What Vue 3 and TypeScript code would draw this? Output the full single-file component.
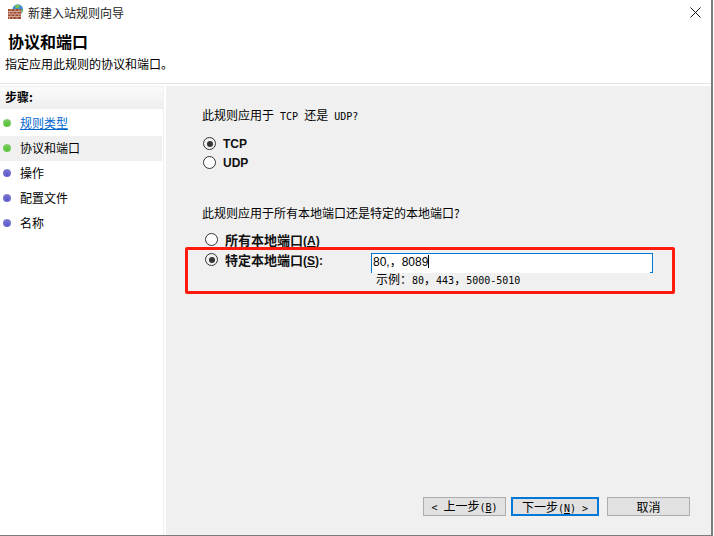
<script setup lang="ts">
interface Step { label: string; color: 'green' | 'blue'; link?: boolean; active?: boolean }
const steps: Step[] = [
  { label: '规则类型', color: 'green', link: true },
  { label: '协议和端口', color: 'green', active: true },
  { label: '操作', color: 'blue' },
  { label: '配置文件', color: 'blue' },
  { label: '名称', color: 'blue' },
]
</script>

<template>
  <div class="win">
    <header class="head">
      <div class="titlebar">
        <svg class="appicon" width="16" height="16" viewBox="0 0 16 16">
          <circle cx="9.800" cy="5.500" r="5.300" fill="#3d8fd0" />
          <path d="M7 1.500c2-1.300 4-1 5 .2-.5 1.800-2.500 3-4.500 2.300zM12 6c1.200-.5 2.500-.5 3 0-.4 2-1.500 3.500-3 4z" fill="#7cc050" />
          <path d="M0 5h13v10H0z" fill="#a04a34" />
          <path d="M0 7.500h13M0 10h13M0 12.500h13M3 5v2.500M7 5v2.500M11 5v2.500M1.500 7.500V10M5 7.500V10M9 7.500V10M3 10v2.500M7 10v2.500M11 10v2.500M1.500 12.500V15M5 12.500V15M9 12.500V15" stroke="#d8b8a8" stroke-width=".8" fill="none" />
        </svg>
        <span class="title">新建入站规则向导</span>
        <svg class="close" width="11" height="11" viewBox="0 0 11 11">
          <path d="M.5.5l10 10M10.500.5l-10 10" stroke="#111" stroke-width="1" fill="none" />
        </svg>
      </div>
      <h1 class="heading">协议和端口</h1>
      <p class="sub">指定应用此规则的协议和端口。</p>
    </header>

    <div class="body">
      <aside class="side">
        <div class="steps-head">步骤:</div>
        <ul class="steps">
          <li v-for="s in steps" :key="s.label" class="step" :class="{ active: s.active }">
            <i class="dot" :class="s.color"></i>
            <span :class="{ link: s.link }">{{ s.label }}</span>
          </li>
        </ul>
      </aside>

      <main class="main">
        <div class="content">
          <p class="q">此规则应用于<span class="m"> TCP </span>还是<span class="m"> UDP?</span></p>
          <div class="radios proto">
            <label class="radio"><i class="rb on"></i><b class="lat">TCP</b></label>
            <label class="radio"><i class="rb"></i><b class="lat">UDP</b></label>
          </div>
          <p class="q q2">此规则应用于所有本地端口还是特定的本地端口?</p>
          <div class="ports">
            <label class="radio port"><i class="rb"></i><b>所有本地端口<span class="lat">(<u>A</u>)</span></b></label>
            <div class="port-row">
              <label class="radio port"><i class="rb on"></i><b>特定本地端口<span class="lat">(<u>S</u>):</span></b></label>
              <div class="port-field">
                <div class="input"><span>80,，8089</span><span class="caret"></span></div>
                <div class="hint">示例：<span class="m">80</span>，<span class="m">443</span>，<span class="m">5000-5010</span></div>
              </div>
            </div>
            <div class="redbox"></div>
          </div>
        </div>
        <footer class="foot">
          <button class="btn"><span class="m">&lt; </span>上一步<span class="m">(<u>B</u>)</span></button>
          <button class="btn primary">下一步<span class="m">(<u>N</u>) &gt;</span></button>
          <button class="btn cancel">取消</button>
        </footer>
      </main>
    </div>
  </div>
</template>

<style>
html, body { margin: 0; background: #fff; }
</style>

<style scoped>
.win {
  box-sizing: border-box;
  width: 713px;
  height: 536px;
  display: flex;
  flex-direction: column;
  background: #fff;
  border-right: 2px solid #7c7c7c;
  border-bottom: 1px solid #7c7c7c;
  font-family: "Noto Sans CJK SC", sans-serif;
  font-size: 12px;
  color: #000;
  overflow: hidden;
}
.head {
  height: 83px;
  flex: none;
}
.titlebar {
  display: flex;
  align-items: center;
  height: 24px;
  padding-left: 8px;
}
.appicon { flex: none; margin-right: 4px; }
.title { color: #222; }
.close { margin-left: auto; margin-right: 10px; }
.heading {
  margin: 8px 0 0 8px;
  font-size: 16px;
  line-height: 18px;
  font-weight: 700;
}
.sub {
  margin: 5px 0 0 5px;
  line-height: 17px;
}
.body {
  flex: 1;
  display: flex;
  min-height: 0;
  border-top: 1px solid #e6e6e6;
  padding-top: 2px;
}
.side {
  width: 164px;
  flex: none;
  box-sizing: border-box;
  border-right: 1px solid #efefef;
  border-top: 1px solid #f0f0f0;
}
.steps-head {
  height: 22px;
  line-height: 20px;
  padding-left: 5px;
  font-weight: 700;
  background: linear-gradient(#fbfbfb, #eeeeee);
}
.steps {
  list-style: none;
  margin: 2px 1px 0 0;
  padding: 0;
}
.step {
  box-sizing: border-box;
  display: flex;
  align-items: center;
  height: 25px;
  padding: 0 0 2px 3px;
}
.step.active { background: #f0f0f0; }
.link { color: #0066cc; text-decoration: underline; }
.dot {
  width: 8px;
  height: 8px;
  border-radius: 50%;
  margin-right: 9px;
  flex: none;
}
.dot.green { background: radial-gradient(circle at 50% 70%, #52c332, #7ecb66 70%, #c6e4ba); }
.dot.blue { background: radial-gradient(circle at 50% 70%, #5a56cc, #7b7ad0 70%, #c4c4e8); }
.main {
  flex: 1;
  display: flex;
  flex-direction: column;
  background: #f0f0f0;
  margin-left: 2px;
  min-width: 0;
}
.content { flex: 1; padding: 20px 0 0 36px; }
.q {
  margin: 0;
  line-height: 18px;
}
.m {
  font-family: "DejaVu Sans Mono", monospace;
  font-size: 10px;
  white-space: pre;
}
.radios.proto { margin-top: 11px; display: flex; flex-direction: column; gap: 6px; margin-left: 1px; }
.radio { display: flex; align-items: center; height: 13px; }
.rb {
  box-sizing: border-box;
  width: 13px;
  height: 13px;
  border: 1px solid #333;
  border-radius: 50%;
  background: #fff;
  margin-right: 7px;
  flex: none;
  position: relative;
}
.rb.on { background: #f0f0f0; }
.rb.on::after {
  content: "";
  position: absolute;
  left: 2.500px;
  top: 2.500px;
  width: 6px;
  height: 6px;
  border-radius: 50%;
  background: #333;
}
b {
  font-weight: 700;
  font-size: 12px;
  color: #111;
}
.port b { font-size: 13px; }
.port .lat { font-size: 12px; }
.lat { font-family: "Liberation Sans", sans-serif; }
.q2 { margin-top: 35px; }
.ports { position: relative; margin-top: 11px; padding-left: 3px; }
.port-row { display: flex; align-items: flex-start; margin-top: 7px; }
.port-row .port { width: 166px; flex: none; height: 13px; }
.port-field { margin-top: 0; }
.input {
  box-sizing: border-box;
  width: 282px;
  height: 20px;
  background: #fff;
  border: 1px solid #0078d7;
  border-bottom: 0;
  font-family: "Liberation Sans", "Noto Sans CJK SC", sans-serif;
  font-size: 12px;
  line-height: 17px;
  padding-left: 1px;
  position: relative;
}
.input::after {
  content: "";
  position: absolute;
  right: -1px;
  bottom: 0;
  width: 3px;
  height: 1px;
  background: #0078d7;
}
.caret {
  display: inline-block;
  width: 1px;
  height: 13px;
  background: #000;
  vertical-align: -2px;
}
.hint {
  margin: -1px 0 0 5px;
  line-height: 14px;
}
.redbox {
  position: absolute;
  left: -17px;
  top: 14px;
  width: 490px;
  height: 47px;
  box-sizing: border-box;
  border: 3px solid #ff1a0d;
  border-radius: 2px;
  pointer-events: none;
}
.foot {
  flex: none;
  display: flex;
  padding: 0 21px 19px 257px;
}
.btn {
  box-sizing: border-box;
  width: 83px;
  height: 19px;
  padding: 0;
  background: #e1e1e1;
  border: 1px solid #adadad;
  font-family: "Noto Sans CJK SC", sans-serif;
  font-size: 12px;
  line-height: 16px;
  color: #000;
}
.btn.primary { width: 88px; margin-left: 5px; border: 2px solid #0078d7; }
.btn.cancel { margin-left: 8px; }
</style>
